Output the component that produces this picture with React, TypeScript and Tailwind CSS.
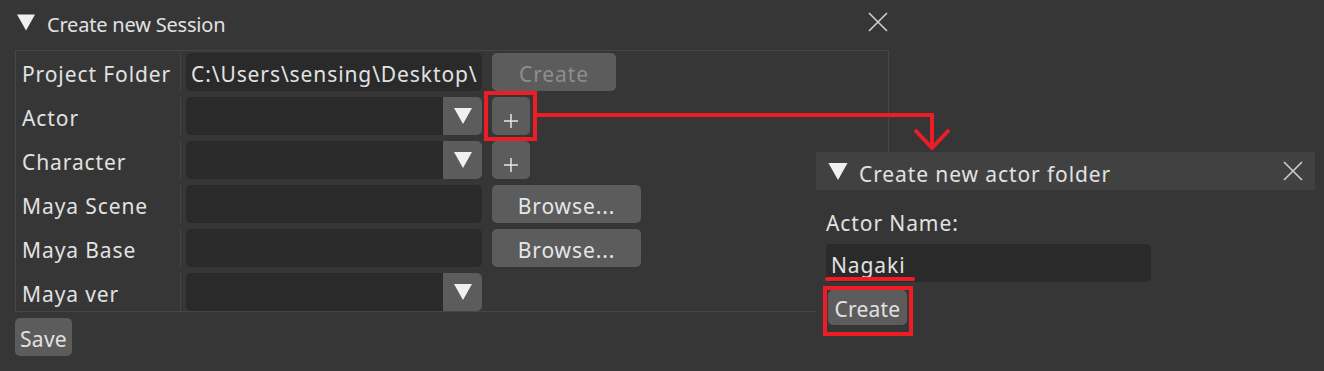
import React from "react";

const Tri = ({ cls = "w-[18px] h-[16px]" }: { cls?: string }) => (
  <svg viewBox="0 0 18 16" className={cls}>
    <polygon points="0,0 18,0 9,16" fill="#f0f0f0" />
  </svg>
);

const CloseX = () => (
  <svg viewBox="0 0 20 20" className="w-[20px] h-[20px]">
    <path d="M1 1 L19 19 M19 1 L1 19" stroke="#cfcfcf" strokeWidth="1.6" />
  </svg>
);

const Plus = () => (
  <svg viewBox="0 0 14 14" className="w-[14px] h-[14px] mt-[4px]">
    <path d="M7 0 L7 14 M0 7 L14 7" stroke="#e6e6e6" strokeWidth="1.5" />
  </svg>
);

const Input = ({ children, w = "w-[296px]" }: { children?: React.ReactNode; w?: string }) => (
  <div className={`${w} h-[38px] rounded-[5px] bg-[#2a2a2a] flex items-center px-[5px] pt-[5px] overflow-hidden whitespace-nowrap`}>
    {children}
  </div>
);

const Combo = () => (
  <div className="w-[296px] h-[38px] rounded-[5px] bg-[#2a2a2a] flex justify-end overflow-hidden">
    <div className="w-[39px] h-full bg-[#5c5c5c] flex items-center justify-center">
      <Tri />
    </div>
  </div>
);

const Btn = ({ children, w, dim }: { children: React.ReactNode; w: string; dim?: boolean }) => (
  <div className={`${w} h-[38px] rounded-[5px] bg-[#5c5c5c] flex items-center justify-center pt-[5px] ${dim ? "text-[#8e8e8e]" : "text-[#e6e6e6]"}`}>
    {children}
  </div>
);

const Row = ({ label, children }: { label: string; children: React.ReactNode }) => (
  <div className="flex h-[38px]">
    <div className="w-[164px] pl-[6px] pt-[6px] flex items-center whitespace-nowrap">{label}</div>
    <div className="w-[1px] bg-[#454545]" />
    <div className="flex items-center gap-[10px] pl-[5px]">{children}</div>
  </div>
);

export default function App() {
  return (
    <div
      className="relative w-[1324px] h-[371px] bg-[#363636] text-[#e2e2e2] text-[21px] tracking-[0.9px] overflow-hidden"
      style={{ fontFamily: '"Noto Sans", "DejaVu Sans", sans-serif' }}
    >
      {/* Main window */}
      <div className="flex flex-col">
        <div className="h-[44px] flex items-center pl-[17px] pr-[436px]">
          <Tri cls="w-[18px] h-[17px]" />
          <span className="ml-[12px] pt-[6px] leading-none text-[20px] tracking-[-0.2px]">Create new Session</span>
          <div className="ml-auto">
            <CloseX />
          </div>
        </div>
        <div className="ml-[15px] mt-[6px] w-[874px] border border-[#464646] flex flex-col">
          <div className="flex flex-col gap-[6px] pt-[2px]">
            <Row label="Project Folder">
              <Input>C:\Users\sensing\Desktop\</Input>
              <Btn w="w-[124px]" dim>Create</Btn>
            </Row>
            <Row label="Actor">
              <Combo />
              <Btn w="w-[38px]"><Plus /></Btn>
            </Row>
            <Row label="Character">
              <Combo />
              <Btn w="w-[38px]"><Plus /></Btn>
            </Row>
            <Row label="Maya Scene">
              <Input />
              <Btn w="w-[149px]">Browse...</Btn>
            </Row>
            <Row label="Maya Base">
              <Input />
              <Btn w="w-[149px]">Browse...</Btn>
            </Row>
            <Row label="Maya ver">
              <Combo />
            </Row>
          </div>
        </div>
        <div className="ml-[15px] mt-[6px] w-[57px] h-[38px] rounded-[5px] bg-[#5c5c5c] flex items-center justify-center pt-[5px] tracking-[0.3px]">
          Save
        </div>
      </div>

      {/* Second window (floating) */}
      <div className="absolute left-[816px] top-[152px] w-[499px] h-[219px] bg-[#363636]">
        <div className="h-[38px] bg-[#414141] flex items-center pl-[12px] pr-[12px]">
          <Tri cls="w-[20px] h-[17px]" />
          <span className="ml-[11px] pt-[6px] leading-none">Create new actor folder</span>
          <div className="ml-auto">
            <CloseX />
          </div>
        </div>
        <div className="pl-[10px] pt-[20px] flex flex-col">
          <div className="h-[24px] flex items-center leading-none pt-[2px]">Actor Name:</div>
          <div className="mt-[10px]">
            <Input w="w-[325px]">Nagaki</Input>
          </div>
          <div className="ml-[2px] mt-[8px] w-[79px] h-[35px] rounded-[5px] bg-[#5c5c5c] flex items-center justify-center pt-[4px] tracking-[0.2px]">
            Create
          </div>
        </div>
      </div>

      {/* Red annotations */}
      <div className="absolute left-[484px] top-[91px] w-[53px] h-[50px] border-[4px] border-[#ee1c24]" />
      <div className="absolute left-[823px] top-[286px] w-[90px] h-[50px] border-[4px] border-[#ee1c24]" />
      <div className="absolute left-[825px] top-[277px] w-[90px] h-[4px] rounded-full bg-[#ee1c24]" />
      <svg className="absolute left-0 top-0 w-[1324px] h-[371px] pointer-events-none" viewBox="0 0 1324 371">
        <path d="M537 115 L932 115 L932 148" stroke="#ee1c24" strokeWidth="4" fill="none" />
        <path d="M916 131 L932 148 L948 131" stroke="#ee1c24" strokeWidth="4" fill="none" strokeLinecap="round" strokeLinejoin="round" />
      </svg>
    </div>
  );
}
